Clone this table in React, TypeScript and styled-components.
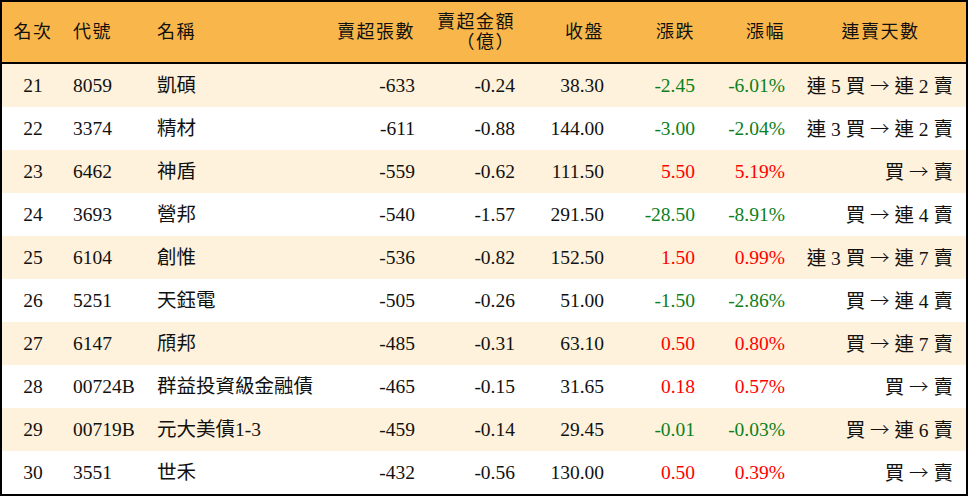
import styled, { createGlobalStyle } from "styled-components";

const GlobalStyle = createGlobalStyle`
  html, body {
    margin: 0;
    padding: 0;
    background: #ffffff;
  }
  body {
    font-family: "Liberation Serif", "Noto Sans CJK TC", serif;
  }
`;

const COLUMNS = "62px 84px 177px 100px 100px 89px 91px 90px 1fr";

const Table = styled.div`
  width: 968px;
  height: 496px;
  box-sizing: border-box;
  border: 2px solid #000;
  background: #fff;
  font-family: "Liberation Serif", "Noto Sans CJK TC", serif;
  font-size: 19.5px;
  color: #111;
`;

const HeaderRow = styled.div`
  display: grid;
  grid-template-columns: ${COLUMNS};
  height: 60px;
  align-items: center;
  background: #f9b74b;
  border-bottom: 2px solid #000;
`;

const Row = styled.div<{ $alt: boolean }>`
  display: grid;
  grid-template-columns: ${COLUMNS};
  height: 43px;
  align-items: center;
  background: ${(p) => (p.$alt ? "#fef2dc" : "#ffffff")};
`;

const Cell = styled.div<{ $align?: "left" | "right" | "center"; $color?: string }>`
  text-align: ${(p) => p.$align ?? "left"};
  padding: ${(p) => (p.$align === "center" ? "0" : p.$align === "right" ? "0 10px 0 0" : "0 0 0 9px")};
  color: ${(p) => p.$color ?? "#111"};
  white-space: nowrap;
  line-height: 22px;
`;

const HeadCell = styled(Cell)`
  font-size: 18px;
  letter-spacing: 1.5px;
  line-height: 20px;
`;

const StreakCell = styled(Cell)`
  padding-right: 13px;
`;

const Arrow = styled.span`
  font-family: "Noto Sans CJK TC", sans-serif;
  font-weight: 300;
`;

type Item = {
  rank: number;
  code: string;
  name: string;
  sheets: number;
  amount: string;
  close: string;
  change: string;
  pct: string;
  from: string;
  to: string;
};

const rows: Item[] = [
  { rank: 21, code: "8059", name: "凱碩", sheets: -633, amount: "-0.24", close: "38.30", change: "-2.45", pct: "-6.01%", from: "連 5 買", to: "連 2 賣" },
  { rank: 22, code: "3374", name: "精材", sheets: -611, amount: "-0.88", close: "144.00", change: "-3.00", pct: "-2.04%", from: "連 3 買", to: "連 2 賣" },
  { rank: 23, code: "6462", name: "神盾", sheets: -559, amount: "-0.62", close: "111.50", change: "5.50", pct: "5.19%", from: "買", to: "賣" },
  { rank: 24, code: "3693", name: "營邦", sheets: -540, amount: "-1.57", close: "291.50", change: "-28.50", pct: "-8.91%", from: "買", to: "連 4 賣" },
  { rank: 25, code: "6104", name: "創惟", sheets: -536, amount: "-0.82", close: "152.50", change: "1.50", pct: "0.99%", from: "連 3 買", to: "連 7 賣" },
  { rank: 26, code: "5251", name: "天鈺電", sheets: -505, amount: "-0.26", close: "51.00", change: "-1.50", pct: "-2.86%", from: "買", to: "連 4 賣" },
  { rank: 27, code: "6147", name: "頎邦", sheets: -485, amount: "-0.31", close: "63.10", change: "0.50", pct: "0.80%", from: "買", to: "連 7 賣" },
  { rank: 28, code: "00724B", name: "群益投資級金融債", sheets: -465, amount: "-0.15", close: "31.65", change: "0.18", pct: "0.57%", from: "買", to: "賣" },
  { rank: 29, code: "00719B", name: "元大美債1-3", sheets: -459, amount: "-0.14", close: "29.45", change: "-0.01", pct: "-0.03%", from: "買", to: "連 6 賣" },
  { rank: 30, code: "3551", name: "世禾", sheets: -432, amount: "-0.56", close: "130.00", change: "0.50", pct: "0.39%", from: "買", to: "賣" },
];

const trendColor = (v: string) => (v.startsWith("-") ? "#0b8020" : "#ff0000");

const App = () => {
  return (
    <>
      <GlobalStyle />
      <Table>
        <HeaderRow>
          <HeadCell $align="center">名次</HeadCell>
          <HeadCell>代號</HeadCell>
          <HeadCell>名稱</HeadCell>
          <HeadCell $align="right">賣超張數</HeadCell>
          <HeadCell $align="right">
            賣超金額
            <br />
            （億）
          </HeadCell>
          <HeadCell $align="right">收盤</HeadCell>
          <HeadCell $align="right">漲跌</HeadCell>
          <HeadCell $align="right">漲幅</HeadCell>
          <HeadCell $align="center">連賣天數</HeadCell>
        </HeaderRow>
        {rows.map((r, i) => (
          <Row key={r.rank} $alt={i % 2 === 0}>
            <Cell $align="center">{r.rank}</Cell>
            <Cell>{r.code}</Cell>
            <Cell>{r.name}</Cell>
            <Cell $align="right">{r.sheets}</Cell>
            <Cell $align="right">{r.amount}</Cell>
            <Cell $align="right">{r.close}</Cell>
            <Cell $align="right" $color={trendColor(r.change)}>
              {r.change}
            </Cell>
            <Cell $align="right" $color={trendColor(r.pct)}>
              {r.pct}
            </Cell>
            <StreakCell $align="right">
              {r.from} <Arrow>→</Arrow> {r.to}
            </StreakCell>
          </Row>
        ))}
      </Table>
    </>
  );
};

export default App;
